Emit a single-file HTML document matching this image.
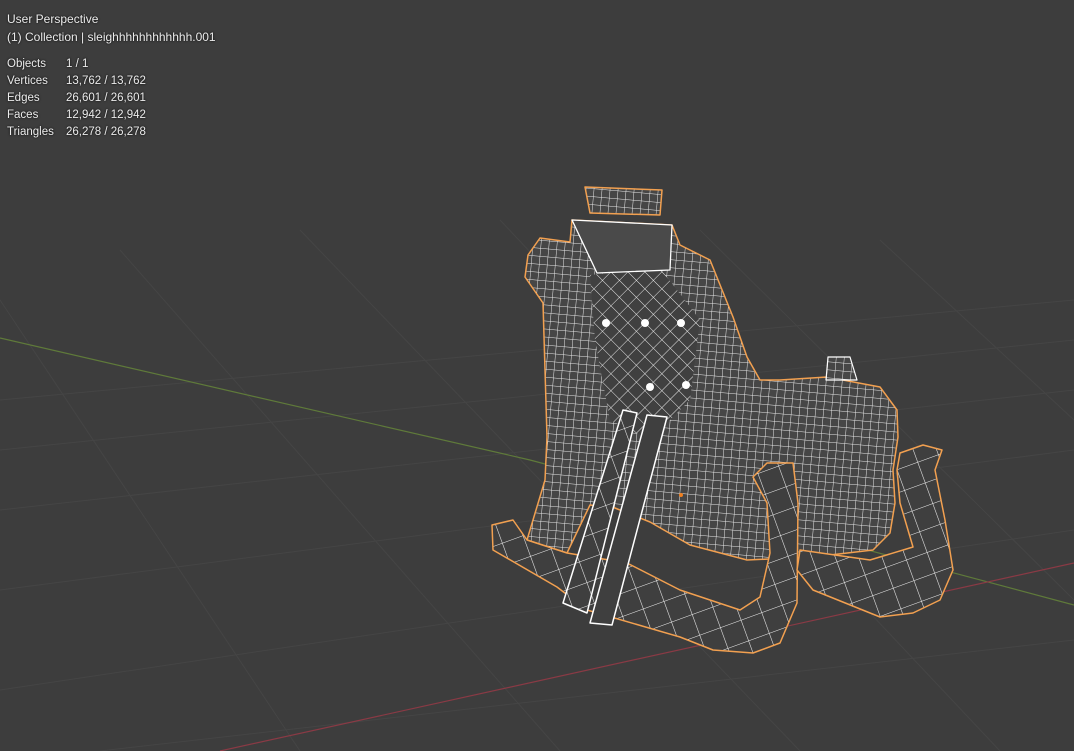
<!DOCTYPE html>
<html><head><style>
html,body{margin:0;padding:0;width:1074px;height:751px;overflow:hidden;background:#3d3d3d}
.t{position:absolute;font-family:"Liberation Sans",sans-serif;font-size:11.5px;color:#ececec;text-shadow:0 0 2px #000;line-height:17px}
</style></head><body>
<svg width="1074" height="751" style="position:absolute;left:0;top:0">
<defs>
<pattern id="m" width="8" height="8" patternUnits="userSpaceOnUse" patternTransform="rotate(5)">
<rect width="8" height="8" fill="#464646"/>
<path d="M0 0H8M0 0V8" stroke="#e8e8e8" stroke-width="1"/>
</pattern>
<pattern id="d" width="12" height="12" patternUnits="userSpaceOnUse" patternTransform="rotate(45)">
<rect width="12" height="12" fill="#404040"/>
<path d="M0 0H12M0 0V12" stroke="#e8e8e8" stroke-width="1"/>
</pattern>
<pattern id="r" width="22" height="22" patternUnits="userSpaceOnUse" patternTransform="rotate(-20)">
<rect width="22" height="22" fill="#3f3f3f"/>
<path d="M0 0H22M0 0V22" stroke="#f0f0f0" stroke-width="1.1"/>
</pattern>
</defs>
<g stroke="#454545" stroke-width="1" fill="none">
<path d="M0 400L1074 300M0 450L1074 340M0 510L1074 390M0 590L1074 450M0 690L1074 530M100 751L1074 640"/>
<path d="M0 300L300 751M120 250L560 751M300 230L800 751M500 220L1000 751M700 230L1074 600M880 240L1074 420"/>
</g>
<path d="M0 338L530 460L1074 605" stroke="#5f7a3a" stroke-width="1.2" fill="none"/>
<path d="M220 751L1074 563" stroke="#8a3a45" stroke-width="1.2" fill="none"/>
<g stroke-linejoin="round">
<path d="M525 277L528 255L540 238L570 242L572 220L672 225L680 245L710 260L733 317L747 357L760 380L780 380L827 377L880 387L897 410L898 437L893 470L895 503L890 533L873 550L813 557L747 560L690 545L650 522L615 508L590 505L567 553L527 540L545 480L547 437L545 370L543 303Z" fill="url(#m)" stroke="#f2a050" stroke-width="1.5"/>
<path d="M590 275L660 268L700 320L690 400L650 440L610 420L595 340Z" fill="url(#d)" stroke="none"/>
<path d="M585 187L662 190L660 215L590 213Z" fill="url(#m)" stroke="#f2a050" stroke-width="1.5"/>
<path d="M572 220L672 225L670 270L597 273Z" fill="#4a4a4a" stroke="#fff" stroke-width="1.3"/>
<path d="M828 357L850 357L857 380L826 380Z" fill="url(#m)" stroke="#fff" stroke-width="1.2"/>
<path d="M492 525L513 520L527 540L567 553L627 563L680 590L740 610L760 597L770 553L767 503L753 477L767 463L793 463L798 503L797 603L780 643L753 653L713 650L680 637L587 610L557 587L493 550Z" fill="url(#r)" stroke="#f2a050" stroke-width="1.5"/>
<path d="M900 453L923 445L942 450L935 470L945 520L953 570L940 600L913 613L880 617L813 590L797 570L800 550L870 560L913 547L900 503L897 470Z" fill="url(#r)" stroke="#f2a050" stroke-width="1.5"/>
<path d="M623 410L637 413L587 613L563 603Z" fill="url(#r)" stroke="#fff" stroke-width="1.5"/>
<path d="M647 415L667 417L612 625L590 623Z" fill="#3f3f3f" stroke="#fff" stroke-width="1.5"/>
</g>
<g fill="#fff"><circle cx="606" cy="323" r="4"/><circle cx="645" cy="323" r="4"/><circle cx="681" cy="323" r="4"/><circle cx="650" cy="387" r="4"/><circle cx="686" cy="385" r="4"/></g>
<circle cx="681" cy="495" r="2" fill="#f08020"/>
</svg>
<div class="t" style="left:7px;top:10px;line-height:18px;font-size:12px">User Perspective<br>(1) Collection | sleighhhhhhhhhhhh.001</div>
<div class="t" style="left:7px;top:56px">Objects<br>Vertices<br>Edges<br>Faces<br>Triangles</div>
<div class="t" style="left:66px;top:56px">1 / 1<br>13,762 / 13,762<br>26,601 / 26,601<br>12,942 / 12,942<br>26,278 / 26,278</div>
</body></html>
